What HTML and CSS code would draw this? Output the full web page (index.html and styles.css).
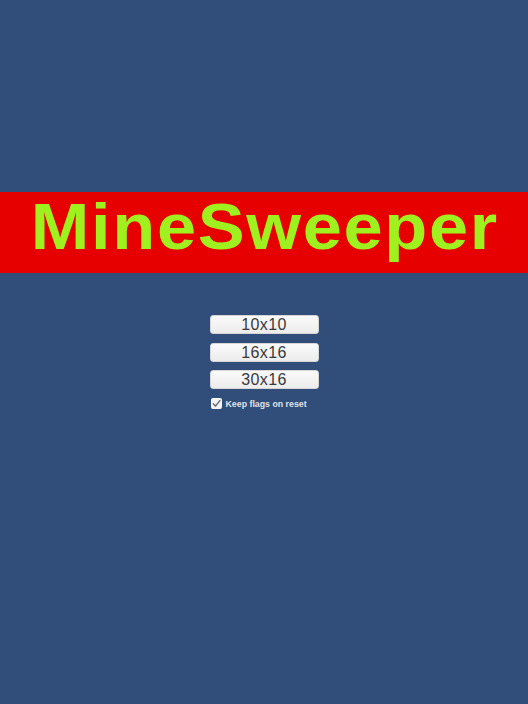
FILE: index.html
```html
<!DOCTYPE html>
<html lang="en">
<head>
<meta charset="utf-8">
<title>MineSweeper</title>
<link rel="stylesheet" href="styles.css">
</head>
<body>
<main class="screen">
  <header class="banner">
    <h1 class="title">MineSweeper</h1>
  </header>
  <nav class="menu">
    <button class="btn" type="button">10x10</button>
    <button class="btn" type="button">16x16</button>
    <button class="btn" type="button">30x16</button>
    <label class="toggle">
      <span class="box">
        <svg viewBox="0 0 11 11" width="11" height="11" aria-hidden="true">
          <path d="M2.3 5.8 L4.5 8.1 L8.9 2.6" fill="none" stroke="#6a6a6a" stroke-width="1.5" stroke-linecap="round" stroke-linejoin="round"/>
        </svg>
      </span>
      <span class="toggle-label">Keep flags on reset</span>
    </label>
  </nav>
</main>
</body>
</html>
```

FILE: styles.css
```css
html, body {
  margin: 0;
  padding: 0;
  background: #314d79;
}

.screen {
  width: 528px;
  height: 704px;
  padding-top: 192px;
  box-sizing: border-box;
  font-family: "Liberation Sans", Arial, sans-serif;
}

.banner {
  height: 81px;
  box-sizing: border-box;
  padding-bottom: 11px;
  background: #e60000;
  display: flex;
  align-items: center;
  justify-content: center;
}

.title {
  margin: 0 -1.5px 0 0;
  font-family: "Liberation Sans", Arial, sans-serif;
  font-weight: bold;
  font-size: 64px;
  line-height: normal;
  letter-spacing: 1.5px;
  color: #9ef01e;
  transform: scaleX(1.1);
}

.menu {
  width: 109px;
  margin: 42px auto 0;
  display: flex;
  flex-direction: column;
  gap: 8.5px;
}

.btn {
  height: 19px;
  width: 109px;
  padding: 0;
  margin: 0;
  border: 1px solid #d6d6d6;
  border-radius: 3px;
  background: linear-gradient(#fafafa, #ececec);
  font-family: "Liberation Sans", Arial, sans-serif;
  font-size: 16px;
  letter-spacing: 0.4px;
  line-height: 17px;
  color: #3a3a3a;
  text-align: center;
}

.toggle {
  display: flex;
  align-items: center;
  gap: 4px;
  padding-left: 1px;
  height: 12px;
}

.box {
  width: 11px;
  height: 11px;
  background: #f4f4f4;
  border-radius: 2px;
  display: flex;
}

.toggle-label {
  font-weight: bold;
  font-size: 8.8px;
  color: #dfe3ea;
  white-space: nowrap;
}
```
